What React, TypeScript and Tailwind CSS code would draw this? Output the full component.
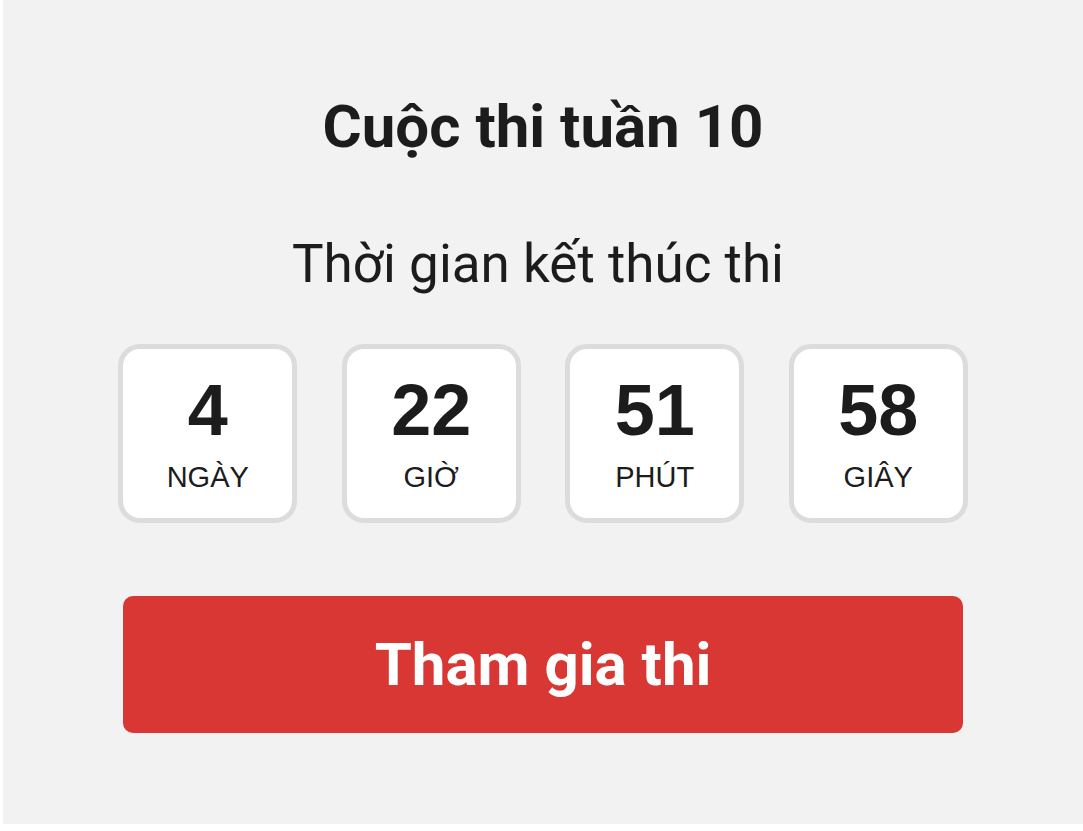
const units = [
  { value: "4", label: "NGÀY" },
  { value: "22", label: "GIỜ" },
  { value: "51", label: "PHÚT" },
  { value: "58", label: "GIÂY" },
];

const CountdownBox = ({ value, label }: { value: string; label: string }) => (
  <div className="w-[179px] h-[179px] rounded-[22px] border-[5px] border-[#dcdcdc] bg-white flex flex-col items-center pt-[25px] font-['Liberation_Sans',Arial,sans-serif] text-[#1c1c1c]">
    <span className="text-[72px] leading-[72px] font-bold">{value}</span>
    <span className="mt-[17px] text-[29px] leading-[29px]">{label}</span>
  </div>
);

export default function App() {
  return (
    <div className="w-[1083px] h-[831px] bg-white">
      <div className="ml-[3px] h-[824px] bg-[#f2f2f2] flex flex-col items-center pt-[97px] font-['Roboto',sans-serif] text-[#1c1c1c]">
        <h1 className="text-[60px] leading-[60px] font-bold">Cuộc thi tuần 10</h1>
        <p className="mt-[81px] pr-[10px] text-[53px] leading-[53px]">Thời gian kết thúc thi</p>
        <div className="mt-[53px] flex gap-[44.5px]">
          {units.map(u => (
            <CountdownBox key={u.label} value={u.value} label={u.label} />
          ))}
        </div>
        <button className="mt-[73px] w-[840px] h-[137px] rounded-[10px] bg-[#d83733] text-white text-[60px] font-bold flex items-center justify-center">
          Tham gia thi
        </button>
      </div>
    </div>
  );
}
